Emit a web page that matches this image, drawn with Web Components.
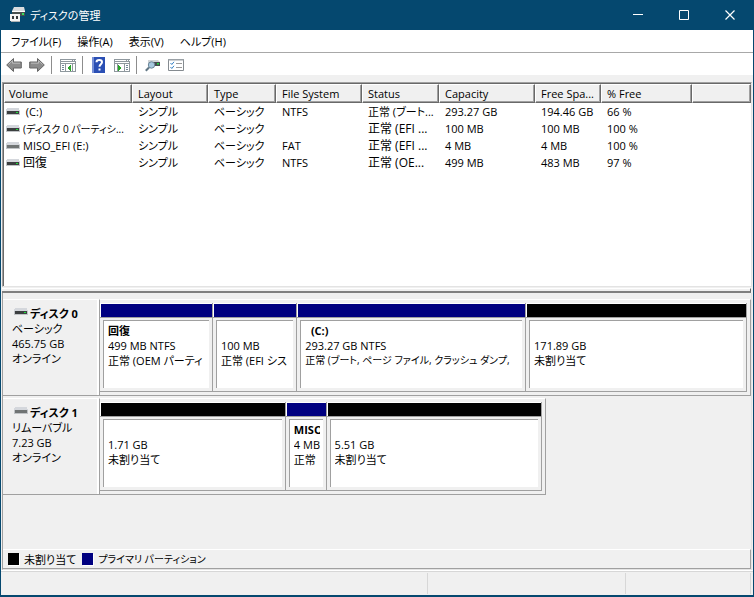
<!DOCTYPE html>
<html lang="ja">
<head>
<meta charset="utf-8">
<title>ディスクの管理</title>
<style>
  html, body { height: 100%; }
  body {
    margin: 0;
    color: #000;
    background: #f0f0f0;
    font: 11px/15px "Open Sans", "Noto Sans CJK JP", sans-serif;
    font-feature-settings: "palt";
    --kanji: 12px;
    --kana: 10px;
  }
</style>
</head>
<body>
<disk-window></disk-window>

<script>
const define = (name, html, setup) => {
  const template = document.createElement('template');
  template.innerHTML = html;
  customElements.define(name, class extends HTMLElement {
    connectedCallback() {
      if (this.shadowRoot) return;
      this.attachShadow({ mode: 'open' }).append(template.content.cloneNode(true));
      if (setup) setup(this, this.shadowRoot);
    }
  });
};

/* Small drive glyph; the "removable" kind has no activity light. */
define('drive-icon', `
  <style>
    :host { display: inline-block; width: 14px; height: 8px; flex: none; }
    svg { display: block; }
    :host([removable]) .led { display: none; }
    :host([removable]) .front { fill: #707474; }
  </style>
  <svg width="14" height="8" viewBox="0 0 14 8" shape-rendering="crispEdges">
    <path d="M1 0h12l1 3H0z" fill="#d4d7dc"/>
    <path d="M0 3h14v4H0z" fill="#c0c3c6"/>
    <path class="front" d="M1 3h12v3H1z" fill="#3c3f40"/>
    <path class="led" d="M10 4h2v1h-2z" fill="#1fe03a"/>
  </svg>`);

define('title-bar', `
  <style>
    :host { display: flex; height: 30px; background: #05486f; color: #fff; align-items: center; }
    .app { margin-left: 8px; flex: none; }
    h1 { margin: 0 0 0 4px; font: inherit; flex: 1; white-space: nowrap; }
    button { width: 46px; height: 30px; padding: 0; border: 0; background: none; color: inherit; display: grid; place-items: center; }
    button:hover { background: #2a6488; }
  </style>
  <svg class="app" width="17" height="16" viewBox="0 0 17 16">
    <path d="M5 0h10l1 4H3z" fill="#d9dcde"/>
    <path d="M3 4h13v5H3z" fill="#48504f"/>
    <path d="M3 4.500h13" stroke="#fff"/>
    <path d="M13 6h2v2h-2z" fill="#34e060"/>
    <path d="M1 7h10v7H1z" fill="#f5f5f5"/>
    <path d="M3 9h2v3H3zM7 9h2v3H7z" fill="#35393b"/>
    <path d="M2 14h9v1H2z" fill="#aeb3b5"/>
  </svg>
  <h1><slot></slot></h1>
  <button aria-label="最小化"><svg width="10" height="10"><path d="M0 4.500h10" stroke="#fff"/></svg></button>
  <button aria-label="最大化"><svg width="10" height="10"><path d="M.5.5h9v9h-9z" fill="none" stroke="#fff"/></svg></button>
  <button aria-label="閉じる"><svg width="10" height="10"><path d="M.5.5l9 9M9.500.5l-9 9" stroke="#fff" stroke-width="1.200"/></svg></button>`);

define('menu-bar', `
  <style>
    :host { display: flex; height: 22px; padding-left: 2px; background: #fff; border-bottom: 1px solid #a8a8a8; }
    button { padding: 0 8px; border: 0; background: none; font: inherit; font-feature-settings: inherit; white-space: nowrap; color: inherit; }
    button:hover { background: #d8eaf9; }
  </style>
  <button>ファイル(F)</button><button>操作(A)</button><button>表示(V)</button><button>ヘルプ(H)</button>`);

define('tool-bar', `
  <style>
    :host { display: flex; height: 22px; box-sizing: border-box; padding: 2px 0 0 5px; background: #fff; align-items: center; }
    button { width: 16px; height: 16px; padding: 0; border: 0; background: none; flex: none; }
    button + button { margin-left: 7px; }
    i { width: 1px; height: 18px; margin: 0 8px 0 6px; background: #8d8d8d; flex: none; }
    svg { display: block; }
  </style>
  <button aria-label="戻る"><svg width="16" height="16"><path d="M.7 8L7.500 1.500v3.500h7.800v6H7.500v3.500z" fill="#8c8c8c" stroke="#666"/><path d="M2.500 7.500L6.500 3.700v2.500h7.500" fill="none" stroke="#bbb"/></svg></button>
  <button aria-label="進む"><svg width="16" height="16"><path d="M15.300 8L8.500 1.500v3.500H.7v6h7.800v3.500z" fill="#8c8c8c" stroke="#666"/><path d="M13.500 7.500L9.500 3.700v2.500H2" fill="none" stroke="#bbb"/></svg></button>
  <i></i>
  <button aria-label="コンソール ツリー"><svg width="16" height="16" shape-rendering="crispEdges"><path d="M0 2h16v13H0z" fill="#8f989e"/><path d="M1 3h11v1H1zM13 3h1v1h-1zM15 3h1v1h-1zM1 5h14v1H1z" fill="#fff"/><path d="M1 7h4v7H1zM6 7h6v7H6zM13 7h2v7h-2z" fill="#fff"/><path d="M2 8h2v1H2zM2 10h2v1H2zM2 12h2v1H2z" fill="#738597"/><path d="M11 8v6L7 11z" fill="#28a428"/></svg></button>
  <i></i>
  <button aria-label="ヘルプ"><svg width="16" height="16"><path d="M1 0h13v16H1z" fill="#2b4fb4"/><path d="M1 0h2v16H1z" fill="#7790d7"/><path d="M5.500 5.200C5.500 2.300 11 2.300 11 5.200c0 2-2.500 2-2.500 4.600" fill="none" stroke="#fff" stroke-width="2"/><path d="M7.500 11.500h2v2h-2z" fill="#fff"/></svg></button>
  <button aria-label="操作ウィンドウ"><svg width="16" height="16" shape-rendering="crispEdges"><path d="M0 2h16v13H0z" fill="#8f989e"/><path d="M1 3h11v1H1zM13 3h1v1h-1zM15 3h1v1h-1zM1 5h14v1H1z" fill="#fff"/><path d="M1 7h2v7H1zM4 7h6v7H4zM11 7h4v7h-4z" fill="#fff"/><path d="M12 8h2v1h-2zM12 10h2v1h-2zM12 12h2v1h-2z" fill="#738597"/><path d="M4 8v6l4-3z" fill="#28a428"/></svg></button>
  <i></i>
  <button aria-label="再スキャン"><svg width="16" height="16"><path d="M3 3h10l2 2v4H3z" fill="#cfd3d6"/><path d="M4 5h11v4H4z" fill="#454b4e"/><path d="M12 6h2v1.500h-2z" fill="#25d540"/><circle cx="6.500" cy="8" r="3.200" fill="#a7c8df" stroke="#6d8799"/><path d="M4 10.500L.8 13.800" stroke="#607684" stroke-width="2"/></svg></button>
  <button aria-label="設定の一覧"><svg width="16" height="16"><path d="M.5 2.500h15v11H.5z" fill="#fff" stroke="#858b90"/><path d="M0 2h16v1.500H0z" fill="#9aa1a6"/><path d="M8 6.500h6M8 10.500h6" stroke="#9a9a9a"/><path d="M2.500 6l1.300 1.500L6 4.800M2.500 10l1.300 1.500L6 8.800" fill="none" stroke="#347fc4"/></svg></button>`);

define('volume-table', `
  <style>
    :host { display: block; min-height: 205px; background: #fff; border: solid; border-width: 1px 1px 1px 1px; border-color: #a0a0a0 #e3e3e3 #e3e3e3 #a0a0a0; box-shadow: inset 1px 1px #696969; padding: 1px 0 0 1px; box-sizing: border-box; overflow: hidden; }
    table { width: 100%; table-layout: fixed; border-collapse: separate; border-spacing: 0; }
    th { height: 19px; box-sizing: border-box; padding: 0 4px 0 5px; text-align: left; font-weight: 400; background: #f0f0f0; border: 1px solid; border-color: #fff #696969 #696969 #fff; box-shadow: inset -1px -1px #a0a0a0; }
    th:first-child { padding-left: 4px; }
    td { height: 17px; padding: 0 2px 0 6px; }
    th, td { line-height: 16px; white-space: nowrap; overflow: hidden; text-overflow: ellipsis; }
    td:first-child { padding: 0 2px; }
    .name { display: flex; align-items: center; gap: 3px; }
    .name span { overflow: hidden; white-space: pre; }
    .kanji { font-size: var(--kanji); }
    .kana { font-size: var(--kana); }
  </style>
  <table>
    <colgroup><col style="width:128px"><col style="width:76px"><col style="width:68px"><col style="width:86px"><col style="width:77px"><col style="width:96px"><col style="width:66px"><col style="width:91px"><col></colgroup>
    <thead><tr><th>Volume</th><th>Layout</th><th>Type</th><th>File System</th><th>Status</th><th>Capacity</th><th>Free Spa...</th><th>% Free</th><th></th></tr></thead>
    <tbody></tbody>
  </table>`, (host, root) => {
  const rows = [
    [' (C:)', 'シンプル', 'ベーシック', 'NTFS', '正常 (ブート...', '293.27 GB', '194.46 GB', '66 %'],
    ['(ディスク 0 パーティシ...', 'シンプル', 'ベーシック', '', '正常 (EFI ...', '100 MB', '100 MB', '100 %'],
    ['MISO_EFI (E:)', 'シンプル', 'ベーシック', 'FAT', '正常 (EFI ...', '4 MB', '4 MB', '100 %'],
    ['回復', 'シンプル', 'ベーシック', 'NTFS', '正常 (OE...', '499 MB', '483 MB', '97 %']
  ];
  const size = t => {
    const kana = /[\u30a0-\u30ff]/.test(t), kanji = /[\u4e00-\u9fff]/.test(t);
    return kanji && !kana ? 'kanji' : t.length > 12 && kana ? 'kana' : '';
  };
  root.querySelector('tbody').innerHTML = rows.map(r => '<tr>' + r.map((t, i) => i
    ? `<td class="${size(t)}">${t}</td>`
    : `<td><div class="name"><drive-icon ${t.startsWith('MISO') ? 'removable' : ''}></drive-icon><span class="${size(t)}">${t}</span></div></td>`
  ).join('') + '</tr>').join('');
});

define('disk-partition', `
  <style>
    :host { display: flex; flex-direction: column; min-width: 0; box-sizing: border-box; border-right: 1px solid #a0a0a0; border-bottom: 1px solid #a0a0a0; --bar: #000; }
    :host([primary]) { --bar: #000080; }
    .bar { height: 13px; background: var(--bar); border-top: 1px solid #fff; border-left: 1px solid #fff; }
    .rule { height: 1px; background: #a0a0a0; }
    .box { flex: 1; margin: 2px 3px 3px; border: solid #a0a0a0; border-width: 1px 0 0 1px; background: #fff; padding: 2px 3px 0 4px; min-width: 0; }
    .text { overflow: hidden; white-space: nowrap; }
    b, span { display: block; height: 15px; white-space: pre; }
    b { font-weight: 700; }
    :host([long]) .state { font-size: var(--kana); }
  </style>
  <div class="bar"></div><div class="rule"></div>
  <div class="box"><div class="text"><b><slot></slot></b><span><slot name="size"></slot></span><span class="state"><slot name="state"></slot></span></div></div>`,
  host => { host.style.flex = host.getAttribute('share') + ' 1 0'; });

define('disk-row', `
  <style>
    :host { display: flex; height: 97px; margin-bottom: 2px; }
    .label { width: 97px; flex: none; box-sizing: border-box; padding: 6px 3px 0 9px; border: solid; border-width: 1px 1px 1px 0; border-color: #fff #a0a0a0 #a0a0a0; box-shadow: inset -2px 0 #fff; white-space: nowrap; }
    .name { display: flex; align-items: center; gap: 2px; padding-left: 2px; font-weight: 700; height: 15px; }
    .name drive-icon { margin-bottom: 4px; }
    .map { display: flex; min-width: 0; box-sizing: border-box; padding: 3px 3px 3px 0; border: solid; border-width: 1px 1px 1px 0; border-color: #fff #a0a0a0 #a0a0a0; }
    .rest { min-width: 0; }
  </style>
  <div class="label">
    <div class="name"><drive-icon></drive-icon><slot name="name"></slot></div>
    <div><slot name="kind"></slot></div>
    <div><slot name="size"></slot></div>
    <div>オンライン</div>
  </div>
  <div class="map"><slot></slot></div><div class="rest"></div>`, (host, root) => {
  const share = Number(host.getAttribute('share'));
  root.querySelector('.map').style.flex = share + ' 1 0';
  root.querySelector('.rest').style.flex = (651 - share) + ' 1 0';
  if (host.hasAttribute('removable')) root.querySelector('drive-icon').setAttribute('removable', '');
});

define('map-legend', `
  <style>
    :host { display: flex; align-items: center; height: 18px; padding-left: 5px; border: solid; border-width: 1px 1px 1px 0; border-color: #fff #a0a0a0 #a0a0a0; white-space: nowrap; }
    i { width: 11px; height: 12px; background: #000; margin-right: 5px; box-shadow: 1px 1px #fff; }
    span + i { background: #000080; margin-left: 6px; }
    .long { font-size: var(--kana); }
  </style>
  <i></i><span>未割り当て</span><i></i><span class="long">プライマリ パーティション</span>`);

define('status-bar', `
  <style>
    :host { display: flex; height: 24px; box-sizing: border-box; padding: 1px 2px 1px 0; border-top: 1px solid #d7d7d7; }
    div { border-right: 1px solid #d7d7d7; box-sizing: border-box; }
  </style>
  <div style="flex:428 1 0"></div><div style="flex:197 1 0"></div><div style="flex:125 1 0"></div>`);

define('disk-window', `
  <style>
    :host { display: flex; flex-direction: column; min-height: 100%; box-sizing: border-box; border: solid #05486f; border-width: 0 1px 2px; background: #f0f0f0; }
    .list { padding: 7px 1px 0; }
    .splitter { height: 5px; margin: 1px 2px 0 1px; box-sizing: border-box; border: solid; border-width: 1px 1px 2px 0; border-color: #fff #696969 #808080; }
    .graph { flex: 1; display: flex; flex-direction: column; margin: 0 1px; border: solid; border-width: 0 1px 1px; border-color: #e3e3e3 #e3e3e3 #e3e3e3 #a0a0a0; padding-top: 6px; }
    .rows { flex: 1; }
    .end { height: 1px; background: #fff; }
  </style>
  <title-bar>ディスクの管理</title-bar>
  <menu-bar></menu-bar>
  <tool-bar></tool-bar>
  <div class="list"><volume-table></volume-table></div>
  <div class="splitter"></div>
  <div class="graph">
    <div class="rows">
      <disk-row share="651">
        <span slot="name">ディスク 0</span><span slot="kind">ベーシック</span><span slot="size">465.75 GB</span>
        <disk-partition primary share="113">回復<span slot="size">499 MB NTFS</span><span slot="state">正常 (OEM パーティ</span></disk-partition>
        <disk-partition primary share="84"><span slot="size">100 MB</span><span slot="state">正常 (EFI シス</span></disk-partition>
        <disk-partition primary long share="230">&nbsp; (C:)<span slot="size">293.27 GB NTFS</span><span slot="state">正常 (ブート, ページ ファイル, クラッシュ ダンプ,</span></disk-partition>
        <disk-partition share="222"><span slot="size">171.89 GB</span><span slot="state">未割り当て</span></disk-partition>
      </disk-row>
      <disk-row share="445" removable>
        <span slot="name">ディスク 1</span><span slot="kind">リムーバブル</span><span slot="size">7.23 GB</span>
        <disk-partition share="186"><span slot="size">1.71 GB</span><span slot="state">未割り当て</span></disk-partition>
        <disk-partition primary share="40">MISO<span slot="size">4 MB</span><span slot="state">正常</span></disk-partition>
        <disk-partition share="216"><span slot="size">5.51 GB</span><span slot="state">未割り当て</span></disk-partition>
      </disk-row>
    </div>
    <map-legend></map-legend>
  </div>
  <div class="end"></div>
  <status-bar></status-bar>`);
</script>
</body>
</html>
